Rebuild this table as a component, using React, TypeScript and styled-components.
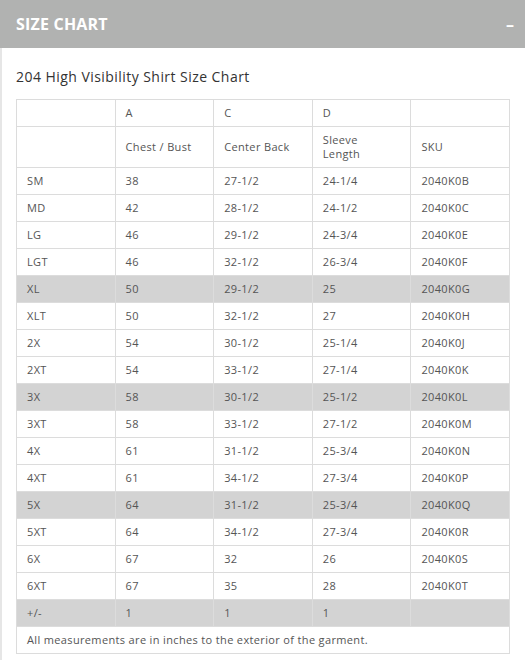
import React from "react";
import styled, { createGlobalStyle } from "styled-components";

const Global = createGlobalStyle`
  html, body { margin: 0; padding: 0; background: #fff; }
  body { font-family: "Open Sans", "DejaVu Sans", sans-serif; }
`;

const Panel = styled.section`
  width: 525px;
  border-left: 2px solid #e6e6e6;
  box-sizing: border-box;
  min-height: 660px;
`;

const HeaderBar = styled.header`
  height: 48px;
  margin-left: -2px;
  background: #b1b2b1;
  display: flex;
  align-items: center;
  justify-content: space-between;
  padding: 0 11px 0 16px;
  box-sizing: border-box;
`;

const HeaderTitle = styled.h2`
  margin: 0;
  color: #fff;
  font-size: 16px;
  font-weight: 700;
  letter-spacing: 0.2px;
`;

const Toggle = styled.span`
  color: #fff;
  font-size: 16px;
  font-weight: 700;
`;

const Body = styled.div`
  padding: 19px 13px 0 14px;
`;

const Title = styled.h3`
  margin: 0 0 12px;
  font-size: 14px;
  font-weight: 400;
  color: #333;
  line-height: 20px;
  letter-spacing: 0.45px;
`;

const Table = styled.table`
  width: 494px;
  border-collapse: collapse;
  table-layout: fixed;
  font-size: 11px;
  color: #555;
  letter-spacing: 0.35px;
`;

const Row = styled.tr<{ $shade?: boolean }>`
  background: ${(p) => (p.$shade ? "#d3d3d3" : "#fff")};
`;

const Cell = styled.td`
  border: 1px solid #dcdcdc;
  padding: 6px 10px;
  line-height: 14px;
  vertical-align: middle;
  text-align: left;
`;

const Note = styled.td`
  border: 1px solid #dcdcdc;
  padding: 6px 10px;
  line-height: 14px;
`;

const rows: [string, string, string, string, string][] = [
  ["SM", "38", "27-1/2", "24-1/4", "2040K0B"],
  ["MD", "42", "28-1/2", "24-1/2", "2040K0C"],
  ["LG", "46", "29-1/2", "24-3/4", "2040K0E"],
  ["LGT", "46", "32-1/2", "26-3/4", "2040K0F"],
  ["XL", "50", "29-1/2", "25", "2040K0G"],
  ["XLT", "50", "32-1/2", "27", "2040K0H"],
  ["2X", "54", "30-1/2", "25-1/4", "2040K0J"],
  ["2XT", "54", "33-1/2", "27-1/4", "2040K0K"],
  ["3X", "58", "30-1/2", "25-1/2", "2040K0L"],
  ["3XT", "58", "33-1/2", "27-1/2", "2040K0M"],
  ["4X", "61", "31-1/2", "25-3/4", "2040K0N"],
  ["4XT", "61", "34-1/2", "27-3/4", "2040K0P"],
  ["5X", "64", "31-1/2", "25-3/4", "2040K0Q"],
  ["5XT", "64", "34-1/2", "27-3/4", "2040K0R"],
  ["6X", "67", "32", "26", "2040K0S"],
  ["6XT", "67", "35", "28", "2040K0T"],
];

const shaded = new Set(["XL", "3X", "5X"]);

export default function App() {
  return (
    <>
      <Global />
      <Panel>
        <HeaderBar>
          <HeaderTitle>SIZE CHART</HeaderTitle>
          <Toggle>–</Toggle>
        </HeaderBar>
        <Body>
          <Title>204 High Visibility Shirt Size Chart</Title>
          <Table>
            <tbody>
              <Row>
                <Cell></Cell>
                <Cell>A</Cell>
                <Cell>C</Cell>
                <Cell>D</Cell>
                <Cell></Cell>
              </Row>
              <Row>
                <Cell></Cell>
                <Cell>Chest / Bust</Cell>
                <Cell>Center Back</Cell>
                <Cell>
                  Sleeve
                  <br />
                  Length
                </Cell>
                <Cell>SKU</Cell>
              </Row>
              {rows.map((r) => (
                <Row key={r[0]} $shade={shaded.has(r[0])}>
                  {r.map((v, i) => (
                    <Cell key={i}>{v}</Cell>
                  ))}
                </Row>
              ))}
              <Row $shade>
                <Cell>+/-</Cell>
                <Cell>1</Cell>
                <Cell>1</Cell>
                <Cell>1</Cell>
                <Cell></Cell>
              </Row>
              <Row>
                <Note colSpan={5}>All measurements are in inches to the exterior of the garment.</Note>
              </Row>
            </tbody>
          </Table>
        </Body>
      </Panel>
    </>
  );
}
